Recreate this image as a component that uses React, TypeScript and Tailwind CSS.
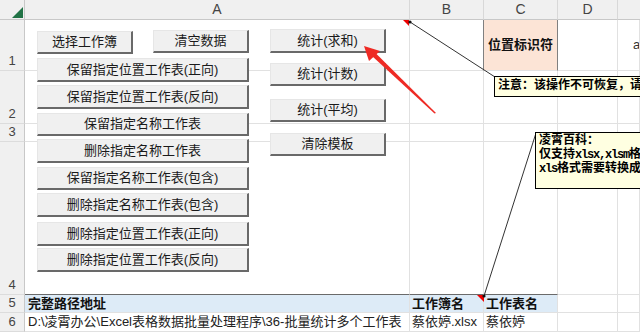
import React from 'react';

type Btn = { label: string; x: number; y: number; w: number; h: number };

const buttons: Btn[] = [
  { label: '选择工作簿', x: 37, y: 31, w: 96, h: 23 },
  { label: '清空数据', x: 153, y: 30, w: 96, h: 23 },
  { label: '保留指定位置工作表(正向)', x: 37, y: 58, w: 212, h: 24 },
  { label: '保留指定位置工作表(反向)', x: 37, y: 85, w: 212, h: 24 },
  { label: '保留指定名称工作表', x: 37, y: 113, w: 212, h: 23 },
  { label: '删除指定名称工作表', x: 37, y: 139, w: 212, h: 24 },
  { label: '保留指定名称工作表(包含)', x: 37, y: 167, w: 212, h: 23 },
  { label: '删除指定名称工作表(包含)', x: 37, y: 193, w: 212, h: 24 },
  { label: '删除指定位置工作表(正向)', x: 37, y: 222, w: 212, h: 24 },
  { label: '删除指定位置工作表(反向)', x: 37, y: 248, w: 212, h: 24 },
  { label: '统计(求和)', x: 270, y: 29, w: 116, h: 24 },
  { label: '统计(计数)', x: 270, y: 63, w: 116, h: 23 },
  { label: '统计(平均)', x: 270, y: 99, w: 116, h: 23 },
  { label: '清除模板', x: 270, y: 133, w: 116, h: 23 },
];

const cjk = "font-['Liberation_Sans','Noto_Sans_CJK_SC',sans-serif]";

const ColHead = ({ label, last }: { label: string; last?: boolean }) => (
  <div
    className={`flex items-center justify-center bg-[#f0f0f0] border-b border-[#c8c8c8] text-[14px] text-[#444] ${
      last ? '' : 'border-r border-r-[#d8d8d8]'
    }`}
  >
    {label}
  </div>
);

const RowHead = ({ label }: { label: string }) => (
  <div className="flex items-end justify-center pb-[1px] bg-[#f0f0f0] border-r border-r-[#c8c8c8] border-b border-b-[#dcdcdc] text-[13px] leading-[16px] text-[#444]">
    {label}
  </div>
);

const Cell = ({ className = '', children }: { className?: string; children?: React.ReactNode }) => (
  <div className={`border-r border-b border-[#e1e1e1] overflow-hidden whitespace-nowrap ${className}`}>{children}</div>
);

// half-width latin like SimSun inside comments
const Half = ({ children }: { children: React.ReactNode }) => (
  <span className="tracking-[-1.2px]">{children}</span>
);

export default function App() {
  return (
    <div className={`relative w-[640px] h-[332px] overflow-hidden bg-white ${cjk}`}>
      <div className="grid grid-cols-[25px_385px_74px_74px_60px_22px] grid-rows-[20px_51px_53px_18px_153px_18px_19px]">
        {/* header row */}
        <div className="relative bg-[#f0f0f0] border-r border-b border-[#c8c8c8]">
          <svg className="absolute left-0 top-0" width="25" height="20">
            <polygon points="23,7 23,18 12,18" fill="#217346" />
          </svg>
        </div>
        <ColHead label="A" />
        <ColHead label="B" />
        <ColHead label="C" />
        <ColHead label="D" />
        <ColHead label="" last />

        {/* row 1 */}
        <RowHead label="1" />
        <Cell />
        <Cell />
        <Cell className="flex items-center justify-center bg-[#fce4d6] border-l border-l-[#808080] border-r-[#808080] -ml-[1px] text-[13px] font-bold text-[#111]">
          位置标识符
        </Cell>
        <Cell />
        <Cell className="pl-[15px] flex items-center text-[13px] text-[#333]">a</Cell>

        {/* row 2 */}
        <RowHead label="2" />
        <Cell />
        <Cell />
        <Cell />
        <Cell />
        <Cell />

        {/* row 3 */}
        <RowHead label="3" />
        <Cell />
        <Cell />
        <Cell />
        <Cell />
        <Cell />

        {/* row 4 */}
        <RowHead label="4" />
        <Cell className="border-b-[#6a6a6a]" />
        <Cell className="border-b-[#6a6a6a]" />
        <Cell className="border-b-[#6a6a6a]" />
        <Cell />
        <Cell />

        {/* row 5 */}
        <RowHead label="5" />
        <Cell className="bg-[#ddebf7] border-[#6a6a6a] pl-[3px] flex items-center text-[13px] font-bold text-[#111]">
          完整路径地址
        </Cell>
        <Cell className="bg-[#ddebf7] border-[#6a6a6a] pl-[2px] flex items-center text-[13px] font-bold text-[#111]">
          工作簿名
        </Cell>
        <Cell className="bg-[#ddebf7] border-[#6a6a6a] pl-[2px] flex items-center text-[13px] font-bold text-[#111]">
          工作表名
        </Cell>
        <Cell />
        <Cell />

        {/* row 6 */}
        <RowHead label="6" />
        <Cell className="pl-[3px] flex items-center text-[13px] text-[#222]">
          D:\凌霄办公\Excel表格数据批量处理程序\36-批量统计多个工作表
        </Cell>
        <Cell className="pl-[2px] flex items-center text-[13px] text-[#222]">蔡依婷.xlsx</Cell>
        <Cell className="pl-[2px] flex items-center text-[13px] text-[#222]">蔡依婷</Cell>
        <Cell />
        <Cell />
      </div>

      {/* form buttons floating over the sheet */}
      {buttons.map((b) => (
        <div
          key={b.label}
          className="absolute flex items-center justify-center bg-[#f0f0f0] border-t border-l border-[#e6e6e6] border-r-2 border-b-2 border-r-[#696969] border-b-[#696969] text-[13px] text-[#1a1a1a] whitespace-nowrap"
          style={{ left: b.x, top: b.y, width: b.w, height: b.h }}
        >
          {b.label}
        </div>
      ))}

      {/* comment connectors, indicators and arrow */}
      <svg className="absolute left-0 top-0 pointer-events-none" width="640" height="332">
        <polygon points="403,20 409,20 409,26" fill="#e00" />
        <polygon points="477,295 484,295 484,302" fill="#e00" />
        <line x1="410" y1="22" x2="495" y2="77" stroke="#333" strokeWidth="1" />
        <circle cx="410" cy="22" r="1.6" fill="#111" />
        <line x1="536" y1="133" x2="484" y2="296" stroke="#333" strokeWidth="1" />
        <circle cx="484" cy="296" r="1.6" fill="#111" />
        <polygon points="436,113 434.5,113.5 372,56 375.5,53" fill="#ee2a24" />
        <polygon points="364,46 380,51 369,61" fill="#ee2a24" />
      </svg>

      <div className="absolute left-[494px] top-[76px] w-[160px] h-[21px] bg-[#ffffe1] border border-black pl-[3px] font-['Liberation_Mono','Noto_Sans_CJK_SC',monospace] font-bold text-[12px] leading-[19px] text-black whitespace-nowrap">
        注意：该操作不可恢复，请
      </div>
      <div className="absolute left-[535px] top-[132px] w-[120px] h-[57px] bg-[#ffffe1] border border-black pl-[3px] pt-[1px] font-['Liberation_Mono','Noto_Sans_CJK_SC',monospace] font-bold text-[12px] leading-[14px] text-black whitespace-nowrap">
        <div>凌霄百科：</div>
        <div>
          仅支持<Half>xlsx,xlsm</Half>格
        </div>
        <div>
          <Half>xls</Half>格式需要转换成
        </div>
      </div>
    </div>
  );
}
